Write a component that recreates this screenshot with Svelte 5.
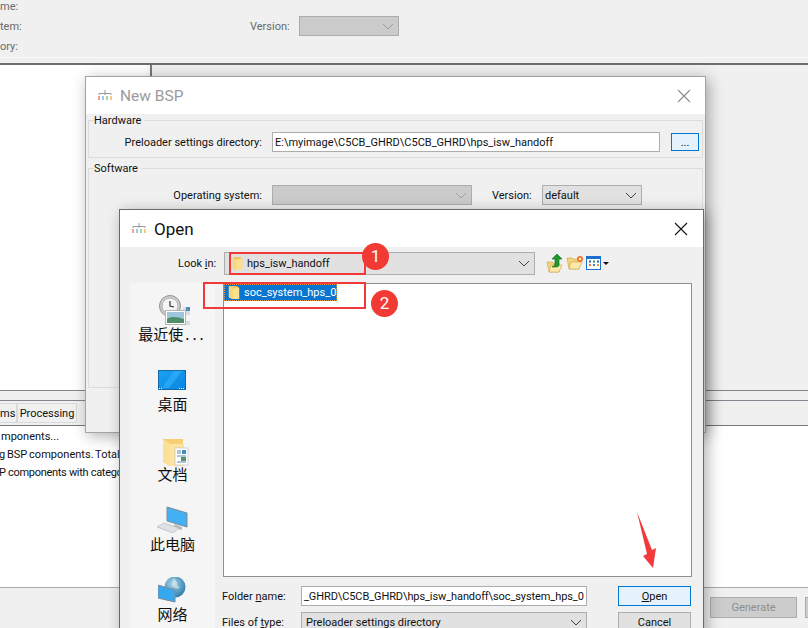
<script>
  const recent = '最近使';
</script>

{#snippet chevron(color)}
  <svg class="chev" width="12" height="7" viewBox="0 0 12 7"><path d="M1 1l5 5 5-5" fill="none" stroke={color} stroke-width="1"/></svg>
{/snippet}

{#snippet appIcon()}
  <svg class="appicon" width="16" height="14" viewBox="0 0 16 14">
    <path d="M8 1v3M2 6V4.500h12V6M8 4.500V6" fill="none" stroke="#9a9a9a" stroke-width="1"/>
    <rect x="1" y="7" width="2" height="4" fill="#e9a58f"/><rect x="5" y="7" width="2" height="4" fill="#9fc7e8"/>
    <rect x="9" y="7" width="2" height="4" fill="#a9d6a0"/><rect x="13" y="7" width="2" height="4" fill="#eecb86"/>
  </svg>
{/snippet}

{#snippet closeX(color)}
  <svg width="14" height="14" viewBox="0 0 14 14"><path d="M1 1l12 12M13 1L1 13" stroke={color} stroke-width="1.1" fill="none"/></svg>
{/snippet}

{#snippet folder(w, h)}
  <svg class="fold" width={w} height={h} viewBox="0 0 14 16" preserveAspectRatio="none">
    <path d="M1 1h9l3 2v12H5L1 13z" fill="#f0c75e"/>
    <path d="M5 4l8-1v12H5z" fill="#fde08e"/>
    <path d="M1 1l4 3v11L1 13z" fill="#f6d77d"/>
  </svg>
{/snippet}

<div class="desk">
  <section class="form">
    <div class="row"><span class="cut">me:</span></div>
    <div class="row">
      <span class="cut">tem:</span>
      <span class="ver">Version:</span>
      <div class="sel off base-sel">{@render chevron('#9c9c9c')}</div>
    </div>
    <div class="row"><span class="cut">ory:</span></div>
  </section>
  <div class="rule"></div>
  <section class="panes">
    <div class="tree"></div>
    <div class="split"></div>
    <div class="detail"></div>
  </section>
  <div class="mid"></div>
  <div class="tabs"><span class="tab tab-a">ms</span><span class="tab tab-b">Processing</span></div>
  <section class="log">
    <p>mponents...</p>
    <p>g BSP components. Total</p>
    <p>P components with catego</p>
  </section>
  <section class="foot">
    <button class="btn off gen">Generate</button>
    <button class="btn off next"></button>
  </section>

  <div class="win bsp">
    <header class="head">
      {@render appIcon()}
      <span class="ttl dim">New BSP</span>
      <span class="x">{@render closeX('#8a8a8a')}</span>
    </header>
    <div class="body">
      <fieldset class="grp hw">
        <legend>Hardware</legend>
        <div class="frow">
          <span class="lab l1">Preloader settings directory:</span>
          <div class="inp path">E:\myimage\C5CB_GHRD\C5CB_GHRD\hps_isw_handoff</div>
          <button class="dots">...</button>
        </div>
      </fieldset>
      <fieldset class="grp sw">
        <legend>Software</legend>
        <div class="frow">
          <span class="lab l1 os">Operating system:</span>
          <div class="sel off ossel">{@render chevron('#a0a0a0')}</div>
          <span class="lab v2">Version:</span>
          <div class="sel dflt"><span class="t">default</span>{@render chevron('#444')}</div>
        </div>
      </fieldset>
    </div>
  </div>

  <div class="win open">
    <header class="head">
      {@render appIcon()}
      <span class="ttl">Open</span>
      <span class="x">{@render closeX('#111')}</span>
    </header>
    <div class="body obody">
      <div class="look">
        <span class="looklab">Look <u>i</u>n:</span>
        <div class="sel combo">
          <span class="cfold">{@render folder(11, 15)}<span class="t">hps_isw_handoff</span></span>
          {@render chevron('#444')}
        </div>
        <div class="tools">
          <svg width="18" height="20" viewBox="0 0 18 20">
            <path d="M1 9h5l1 1h6v9H3z" fill="#f3d27a" stroke="#c9a54a" stroke-width=".6"/>
            <path d="M3 19l2-7h11l-3 7z" fill="#fde9a9" stroke="#c9a54a" stroke-width=".6"/>
            <path d="M11 1l5 5h-3v6c0 1-1 2-3 2H6c2-1 3-2 3-4V6H6z" fill="#1d9a2b" stroke="#0c6a18" stroke-width=".6"/>
          </svg>
          <svg width="18" height="16" viewBox="0 0 18 16">
            <path d="M1 3h5l1 1h6v10H3z" fill="#f3d27a" stroke="#c9a54a" stroke-width=".6"/>
            <path d="M3 14l2-7h11l-3 7z" fill="#fde9a9" stroke="#c9a54a" stroke-width=".6"/>
            <circle cx="14" cy="4" r="3" fill="#f0702a"/><circle cx="14" cy="4" r="1.300" fill="#fff2c0"/>
          </svg>
          <svg width="23" height="15" viewBox="0 0 23 15">
            <rect x=".5" y=".5" width="14" height="13" fill="#fff" stroke="#1a6fd0"/>
            <rect x="0" y="0" width="15" height="3" fill="#1a6fd0"/>
            <rect x="3" y="4.500" width="2" height="2" fill="#2a5cb0"/><rect x="7" y="4.500" width="2" height="2" fill="#2aa050"/><rect x="11" y="4.500" width="2" height="2" fill="#2a5cb0"/>
            <rect x="3" y="8" width="2" height="2" fill="#e07a30"/><rect x="7" y="8" width="2" height="2" fill="#3a80d0"/><rect x="11" y="8" width="2" height="2" fill="#e0a030"/>
            <path d="M17 6h6l-3 3z" fill="#111"/>
          </svg>
        </div>
      </div>
      <div class="main">
        <nav class="side">
          <div class="place p1">
            <svg class="ic ic1" width="31" height="32" viewBox="0 0 31 32">
              <circle cx="11" cy="11" r="10.500" fill="#cfcfcf" stroke="#8f8f8f"/>
              <circle cx="11" cy="11" r="8" fill="#f4f4f4" stroke="#8a8a8a" stroke-width=".6"/>
              <path d="M11 6v5l4 1" fill="none" stroke="#333" stroke-width="1.200"/>
              <path d="M22 11h9v21H22z" fill="#f4f4f4"/>
              <path d="M24 13h7M24 15h7M24 17h7M24 19h7M24 27h7M24 29h7" stroke="#b5bcc4" stroke-width=".8"/>
              <rect x="27" y="12" width="4" height="4" fill="#4d8fb8"/>
              <rect x="6.500" y="15.500" width="20" height="14" fill="#fff" stroke="#b5b5b5"/>
              <rect x="8" y="17" width="17" height="7" fill="#9cc6dc"/>
              <path d="M8 24c5-3 10-2 17 0v4H8z" fill="#4d8f6a"/>
            </svg>
            <span class="trunc">{recent}<span class="dotsx">...</span></span>
          </div>
          <div class="place p2">
            <svg class="ic" width="28" height="20" viewBox="0 0 28 20">
              <defs><linearGradient id="dsk" x1="0" y1="0" x2="1" y2="1"><stop offset="0" stop-color="#1aa3f5"/><stop offset="1" stop-color="#0a84e0"/></linearGradient></defs>
              <rect x=".5" y=".5" width="27" height="19" fill="url(#dsk)" stroke="#1668a8"/>
              <path d="M4 18L16 1h8L11 18z" fill="#36b2fa" opacity=".6"/>
              <path d="M1 18.500h3M21 18.500h6" stroke="#fff" stroke-dasharray="1 1"/>
            </svg>
            <span>桌面</span>
          </div>
          <div class="place p3">
            <svg class="ic" width="26" height="28" viewBox="0 0 26 28">
              <path d="M0 1h20v27H7L0 24z" fill="#f6cf72"/>
              <path d="M7 6h14v22H7z" fill="#fde3a0"/>
              <path d="M0 1l7 5v22l-7-4z" fill="#fbe09a"/>
              <rect x="12" y="10" width="13" height="17" fill="#fff" stroke="#b8b8b8" stroke-width=".6"/>
              <path d="M14 13h4M14 15h4M14 18h9M14 24h9" stroke="#5b8db0"/>
              <rect x="19" y="12" width="4" height="4" fill="#3f8fc0"/>
              <rect x="18" y="19" width="5" height="4" fill="#5d8f6a"/>
            </svg>
            <span>文档</span>
          </div>
          <div class="place p4">
            <svg class="ic" width="32" height="27" viewBox="0 0 32 27">
              <path d="M11 1l20 6v14l-20-6z" fill="#42b0f2" stroke="#7e8c96"/>
              <path d="M19 18l-2 4 9 2v-3z" fill="#b6bcc1"/>
              <path d="M1 21l7-4 15 5-6 5z" fill="#dfe2e5" stroke="#a9aeb3" stroke-width=".6"/>
            </svg>
            <span>此电脑</span>
          </div>
          <div class="place p5">
            <svg class="ic" width="28" height="26" viewBox="0 0 28 26">
              <defs><radialGradient id="glb" cx=".4" cy=".35" r=".7"><stop offset="0" stop-color="#a8d4e6"/><stop offset="1" stop-color="#2b7aa8"/></radialGradient></defs>
              <circle cx="17" cy="10" r="10.500" fill="url(#glb)"/>
              <path d="M15 1c3 2 5 4 4 7l3 3c-3 1-6 0-8-3z" fill="#e3eef3" opacity=".6"/>
              <path d="M0 8l17 5v12L0 21z" fill="#35a8f0" stroke="#7e8c96"/>
            </svg>
            <span>网络</span>
          </div>
        </nav>
        <div class="right">
          <div class="list">
            <div class="item">{@render folder(12, 15)}<span class="t">soc_system_hps_0</span></div>
          </div>
          <div class="fields">
            <div class="fl">
              <span class="flab">Folder <u>n</u>ame:</span>
              <div class="inp fname">_GHRD\C5CB_GHRD\hps_isw_handoff\soc_system_hps_0</div>
              <button class="btn primary"><u>O</u>pen</button>
            </div>
            <div class="fl">
              <span class="flab">Files of <u>t</u>ype:</span>
              <div class="sel ftype"><span class="t">Preloader settings directory</span>{@render chevron('#444')}</div>
              <button class="btn">Cancel</button>
            </div>
          </div>
        </div>
      </div>
    </div>
  </div>

  <div class="mark m1"></div>
  <div class="mark m2"></div>
  <div class="badge b1">1</div>
  <div class="badge b2">2</div>
  <svg class="arrow" width="26" height="62" viewBox="0 0 26 62">
    <path d="M4 1L14 43l-4 2 10 12 3-20-4 2z" fill="#f23a3a"/>
  </svg>
</div>

<style>
  :global(body) { margin: 0; }
  .desk {
    position: relative; width: 808px; height: 628px; overflow: hidden;
    background: #f0f0f0; color: #111;
    font: 11px/16px Roboto, "Noto Sans CJK SC", sans-serif;
  }
  button { font: inherit; color: inherit; padding: 0; margin: 0; }
  p { margin: 0; }

  .form { display: flex; flex-direction: column; margin-top: -4px; height: 61px; }
  .row { height: 20px; flex: none; display: flex; align-items: center; }
  .cut, .ver, .lab, .looklab, .flab, .t { padding-top: 2px; }
  .cut { width: 250px; color: #6a6a6a; }
  .ver { width: 49px; color: #6a6a6a; }
  .sel {
    box-sizing: border-box; height: 20px; border: 1px solid #adadad; background: #e1e1e1;
    display: flex; align-items: center; justify-content: space-between; padding: 0 4px 0 2px;
  }
  .sel.off { background: #cbcbcb; justify-content: flex-end; }
  .base-sel { width: 100px; }
  .chev, .fold { flex: none; }

  .rule { height: 8px; box-sizing: border-box; border-top: 1px solid #fafafa; border-bottom: 2px solid #6e6e6e; }
  .panes { display: flex; height: 325px; }
  .tree { width: 147px; background: #fff; }
  .split { width: 5px; box-sizing: border-box; background: #f8f8f8; border-right: 2px solid #777; }
  .detail { flex: 1; background: #f0f0f0; }
  .mid { border-top: 1px solid #85858f; border-bottom: 1px solid #85858f; background: #f0f0f0; box-sizing: border-box; height: 11px; }
  .tabs { display: flex; height: 25px; box-sizing: border-box; padding-top: 2px; border-bottom: 1px solid #777; }
  .tab { box-sizing: border-box; height: 20px; border: 1px solid #d9d9d9; background: #f0f0f0; line-height: 19px; white-space: nowrap; }
  .tab-a { width: 17px; border-left: 0; padding-right: 3px; text-align: right; }
  .tab-b { width: 60px; text-align: center; }
  .log { height: 161px; background: #fff; padding-top: 2px; box-sizing: border-box; }
  .log p { height: 18px; line-height: 18px; white-space: nowrap; }
  .log p:first-child { padding-left: 1px; }
  .log p:nth-child(2) { letter-spacing: .02px; margin-left: -1px; word-spacing: -1px; }
  .log p:nth-child(3) { letter-spacing: -.3px; margin-left: -1px; }
  .foot { height: 41px; border-top: 1px solid #aaa; display: flex; padding: 9px 0 0 710px; gap: 8px; box-sizing: border-box; }
  .btn { box-sizing: border-box; flex: none; width: 73px; height: 20px; border: 1px solid #adadad; background: #e1e1e1; line-height: 17px; }
  .btn.off { background: #ccc; color: #8f8f8f; }
  .gen { width: 87px; height: 21px; }
  .next { width: 40px; height: 21px; }

  .win { position: absolute; box-sizing: border-box; background: #f0f0f0; box-shadow: 3px 3px 14px rgba(0,0,0,.32); }
  .bsp { left: 85px; top: 76px; width: 621px; height: 357px; border: 1px solid #a3a3a3; }
  .open { left: 119px; top: 209px; width: 585px; height: 440px; border: 1px solid #6a6a6a; }
  .head { display: flex; align-items: center; background: #fff; height: 37px; padding-left: 11px; }
  .appicon { margin-right: 8px; flex: none; }
  .ttl { font-size: 17px; flex: 1; }
  .dim { color: #9b9b9b; font-size: 15.5px; margin-left: -1px; }
  .x { width: 14px; height: 14px; margin-right: 14px; }
  .open .x { margin-right: 15px; }
  .open .ttl { margin-left: -1px; }

  .body { padding: 0 2px; }
  .grp { margin: 2px 0 0; padding: 0; border: 1px solid #dcdcdc; box-sizing: border-box; }
  legend { padding: 2px 3px 0 0; margin-left: 5px; line-height: 14px; }
  .hw { height: 46px; margin-top: -2px; }
  .sw { height: 228px; }
  .frow { display: flex; align-items: center; }
  .hw .frow { margin-top: 4px; }
  .sw .frow { margin-top: 9px; }
  .lab { white-space: nowrap; }
  .l1 { width: 183px; box-sizing: border-box; text-align: right; padding-right: 10px; flex: none; }
  .inp { box-sizing: border-box; height: 20px; border: 1px solid #adadad; background: #fff; line-height: 19px; padding-left: 2px; white-space: nowrap; overflow: hidden; }
  .path { width: 388px; }
  .dots { width: 28px; height: 18px; margin-left: 11px; border: 1px solid #0078d7; background: #e5f1fb; line-height: 13px; }
  .ossel { width: 200px; }
  .v2 { margin-left: 20px; width: 50px; }
  .dflt { width: 100px; }

  .obody { padding: 5px 10px 0; }
  .look { display: flex; align-items: center; height: 22px; }
  .looklab { width: 46px; margin-left: 48px; flex: none; white-space: nowrap; }
  .combo { width: 311px; height: 23px; padding: 0 4px 0 7px; }
  .cfold { display: flex; align-items: center; gap: 4px; }
  .tools { display: flex; align-items: center; gap: 2px; margin-left: 11px; }
  .main { display: flex; margin-top: 9px; }
  .side { width: 85px; height: 345px; background: #f5f5f5; flex: none; display: flex; flex-direction: column; align-items: center; font-size: 15px; line-height: 20px; font-family: "Noto Sans CJK SC", sans-serif; }
  .place { display: flex; flex-direction: column; align-items: center; justify-content: flex-end; height: 70px; flex: none; }
  .p1 { height: 61px; }
  .ic { flex: none; margin-bottom: 1px; }
  .ic1 { margin-bottom: -3px; margin-left: 4px; }
  .p2 .ic { margin-bottom: 4px; }
  .p3 .ic { margin-bottom: -2px; margin-left: 6px; }
  .trunc { white-space: nowrap; }
  .dotsx { letter-spacing: 3px; margin-left: 2px; }
  .right { flex: 1; margin-left: 8px; min-width: 0; }
  .list { box-sizing: border-box; height: 294px; width: 469px; background: #fff; border: 1px solid #8f8f8f; }
  .item { display: flex; align-items: center; gap: 4px; height: 17px; background: #0a75d1; outline: 1px dotted #e8943a; outline-offset: -1px; padding: 0 1px 0 4px; color: #fff; box-sizing: border-box; width: 113px; white-space: nowrap; overflow: hidden; }
  .item .t { padding-top: 0; }
  .fields { display: flex; flex-direction: column; gap: 6px; margin-top: 9px; }
  .fl { display: flex; align-items: center; height: 20px; }
  .flab { width: 79px; margin-left: -1px; flex: none; white-space: nowrap; }
  .fname { width: 286px; flex: none; letter-spacing: -.1px; }
  .ftype { width: 286px; flex: none; padding: 0 4px; }
  .fl .btn { margin-left: 31px; }
  .primary { border-color: #0078d7; background: #e5f1fb; }

  .mark { position: absolute; box-sizing: border-box; border: 2px solid #f23838; }
  .m1 { left: 229px; top: 252px; width: 137px; height: 23px; }
  .m2 { left: 203px; top: 282px; width: 163px; height: 27px; }
  .badge { position: absolute; width: 27px; height: 27px; border-radius: 50%; background: #f23a34; color: #fff; font-size: 17px; line-height: 27px; text-align: center; }
  .b1 { left: 362px; top: 243px; }
  .b2 { left: 371px; top: 290px; }
  .arrow { position: absolute; left: 633px; top: 511px; }
</style>
